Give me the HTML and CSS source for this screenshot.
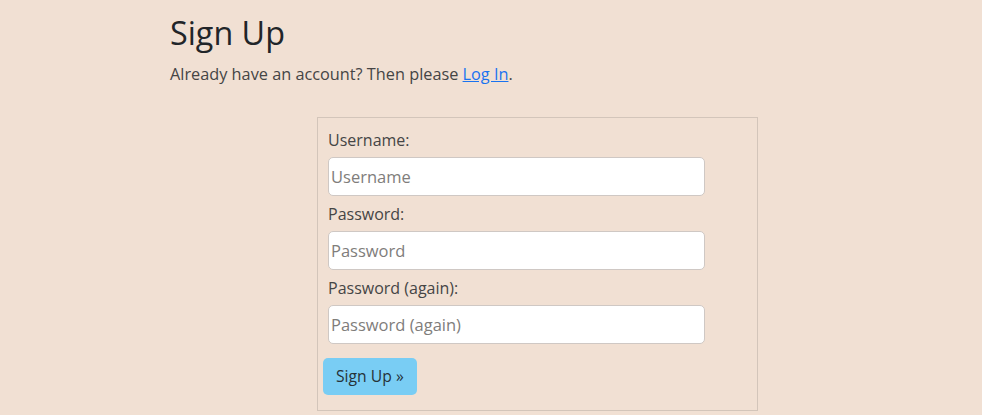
FILE: index.html
```html
<!DOCTYPE html>
<html lang="en">
<head>
<meta charset="utf-8">
<title>Sign Up</title>
<link rel="stylesheet" href="styles.css">
</head>
<body>
<main class="page">
  <h1 class="title">Sign Up</h1>
  <p class="lead-text">Already have an account? Then please <a href="#" class="link">Log In</a>.</p>
  <form class="signup-form">
    <div class="field">
      <label class="field-label" for="username">Username:</label>
      <input class="field-input" id="username" type="text" placeholder="Username">
    </div>
    <div class="field">
      <label class="field-label" for="password1">Password:</label>
      <input class="field-input" id="password1" type="password" placeholder="Password">
    </div>
    <div class="field">
      <label class="field-label" for="password2">Password (again):</label>
      <input class="field-input" id="password2" type="password" placeholder="Password (again)">
    </div>
    <button class="submit-btn" type="submit">Sign Up &raquo;</button>
  </form>
</main>
</body>
</html>
```
FILE: styles.css
```css
html, body {
  margin: 0;
  padding: 0;
}
body {
  background: #f1e0d3;
  color: #212529;
  font-family: "Open Sans", "Noto Sans", sans-serif;
  font-size: 16px;
  line-height: 1.5;
}
.page {
  padding: 0 0 0 170px;
}
.title {
  margin: 0;
  padding-top: 13px;
  font-size: 32.3px;
  font-weight: 400;
  line-height: 1.2;
  color: #212529;
}
.lead-text {
  margin: 10px 0 0;
  font-size: 16.3px;
  line-height: 24px;
  color: #454545;
}
.link {
  color: #1a73f0;
  text-decoration: underline;
}
.signup-form {
  margin: 31px 0 0 147px;
  width: 419px;
  border: 1px solid #d3c5ba;
  padding: 10px 10px 15px 10px;
}
.field {
  display: flex;
  flex-direction: column;
  align-items: flex-start;
  margin-bottom: 6px;
}
.field-label {
  font-size: 16px;
  line-height: 24px;
  margin-bottom: 5px;
  color: #454545;
}
.field-input {
  box-sizing: border-box;
  width: 377px;
  height: 39px;
  border: 1px solid #cfc8c4;
  border-radius: 5px;
  background: #fff;
  padding: 0 2px;
  font-family: inherit;
  font-size: 16.5px;
  color: #333;
}
.field-input::placeholder {
  color: #807d7b;
}
.submit-btn {
  margin: 8px 0 0 -5px;
  height: 37px;
  padding: 0 13px;
  border: none;
  border-radius: 5px;
  background: #79cdf4;
  color: #263238;
  font-family: inherit;
  font-size: 15.7px;
}
```
